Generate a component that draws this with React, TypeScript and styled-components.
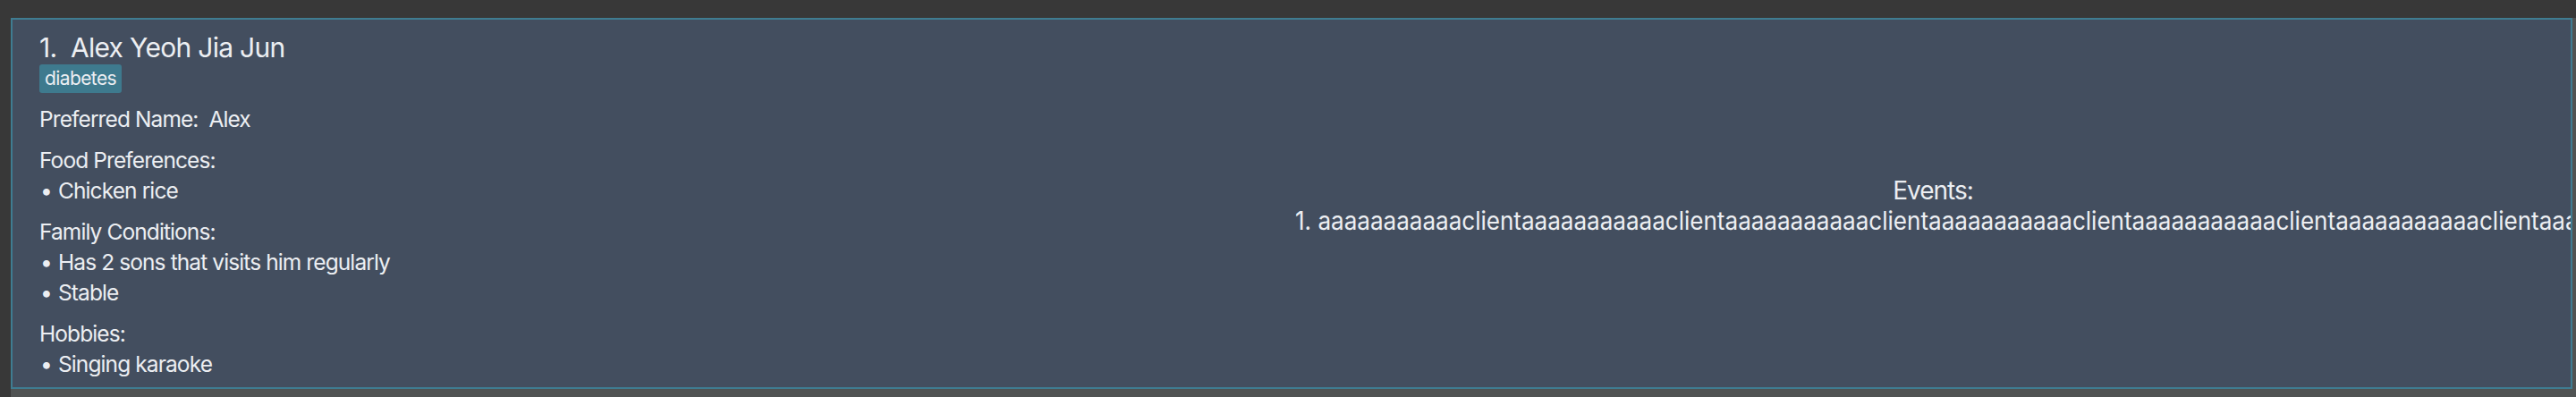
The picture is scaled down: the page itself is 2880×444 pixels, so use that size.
import React from "react";
import styled, { createGlobalStyle } from "styled-components";

const GlobalStyle = createGlobalStyle`
  html, body {
    margin: 0;
    padding: 0;
    background: #383838;
  }
  body {
    font-family: Inter, "Noto Sans", "Liberation Sans", sans-serif;
    color: #eceef2;
  }
  * { box-sizing: border-box; }
`;

const Page = styled.div`
  width: 2880px;
  height: 444px;
  padding: 20px 0 0 12px;
  background: #383838;
  overflow: hidden;
`;

const ListPanel = styled.div`
  height: 424px;
  background: #505353;
  padding-right: 4px;
`;

const Card = styled.div`
  display: grid;
  grid-template-columns: minmax(0, 1fr) minmax(0, 1fr);
  border: 2px solid #3f7c91;
  background: #434e5f;
  padding: 13px 0 9px;
  overflow: hidden;
`;

const Details = styled.div`
  display: flex;
  flex-direction: column;
  align-items: flex-start;
  padding-left: 30px;
`;

const Title = styled.div`
  font-size: 30px;
  line-height: 36px;
  letter-spacing: -0.7px;
  white-space: pre;
`;

const Tag = styled.span`
  margin-top: 1px;
  height: 32px;
  line-height: 32px;
  padding: 0 6px 0 6px;
  font-size: 21px;
  letter-spacing: -0.6px;
  background: #3e7a8e;
  border-radius: 3px;
`;

const Section = styled.div`
  margin-top: 12px;
  display: flex;
  flex-direction: column;
`;

const Line = styled.div`
  font-size: 24.5px;
  line-height: 34px;
  letter-spacing: -0.9px;
  white-space: pre;
`;

const Bullet = styled.span`
  display: inline-block;
  width: 21px;
  padding-left: 1px;
`;

const Events = styled.div`
  display: flex;
  flex-direction: column;
  justify-content: center;
  padding-left: 4px;
  min-width: 0;
`;

const EventsHeader = styled.div`
  text-align: center;
  font-size: 28px;
  line-height: 34px;
  letter-spacing: -1px;
`;

const EventsItem = styled.div`
  font-size: 28px;
  line-height: 34px;
  white-space: nowrap;
  transform: scaleX(0.93);
  transform-origin: left center;
`;

type SectionData = { label: string; items?: string[] };

const sections: SectionData[] = [
  { label: "Preferred Name:  Alex" },
  { label: "Food Preferences:", items: ["Chicken rice"] },
  {
    label: "Family Conditions:",
    items: ["Has 2 sons that visits him regularly", "Stable"],
  },
  { label: "Hobbies:", items: ["Singing karaoke"] },
];

const eventText =
  "1. " + Array.from({ length: 9 }, () => "aaaaaaaaaaaclient").join("");

export default function App() {
  return (
    <>
      <GlobalStyle />
      <Page>
        <ListPanel>
          <Card>
            <Details>
              <Title>{"1.  Alex Yeoh Jia Jun"}</Title>
              <Tag>diabetes</Tag>
              {sections.map((s) => (
                <Section key={s.label}>
                  <Line>{s.label}</Line>
                  {s.items?.map((it) => (
                    <Line key={it}>
                      <Bullet>•</Bullet>
                      {it}
                    </Line>
                  ))}
                </Section>
              ))}
            </Details>
            <Events>
              <EventsHeader>Events:</EventsHeader>
              <EventsItem>{eventText}</EventsItem>
            </Events>
          </Card>
        </ListPanel>
      </Page>
    </>
  );
}
